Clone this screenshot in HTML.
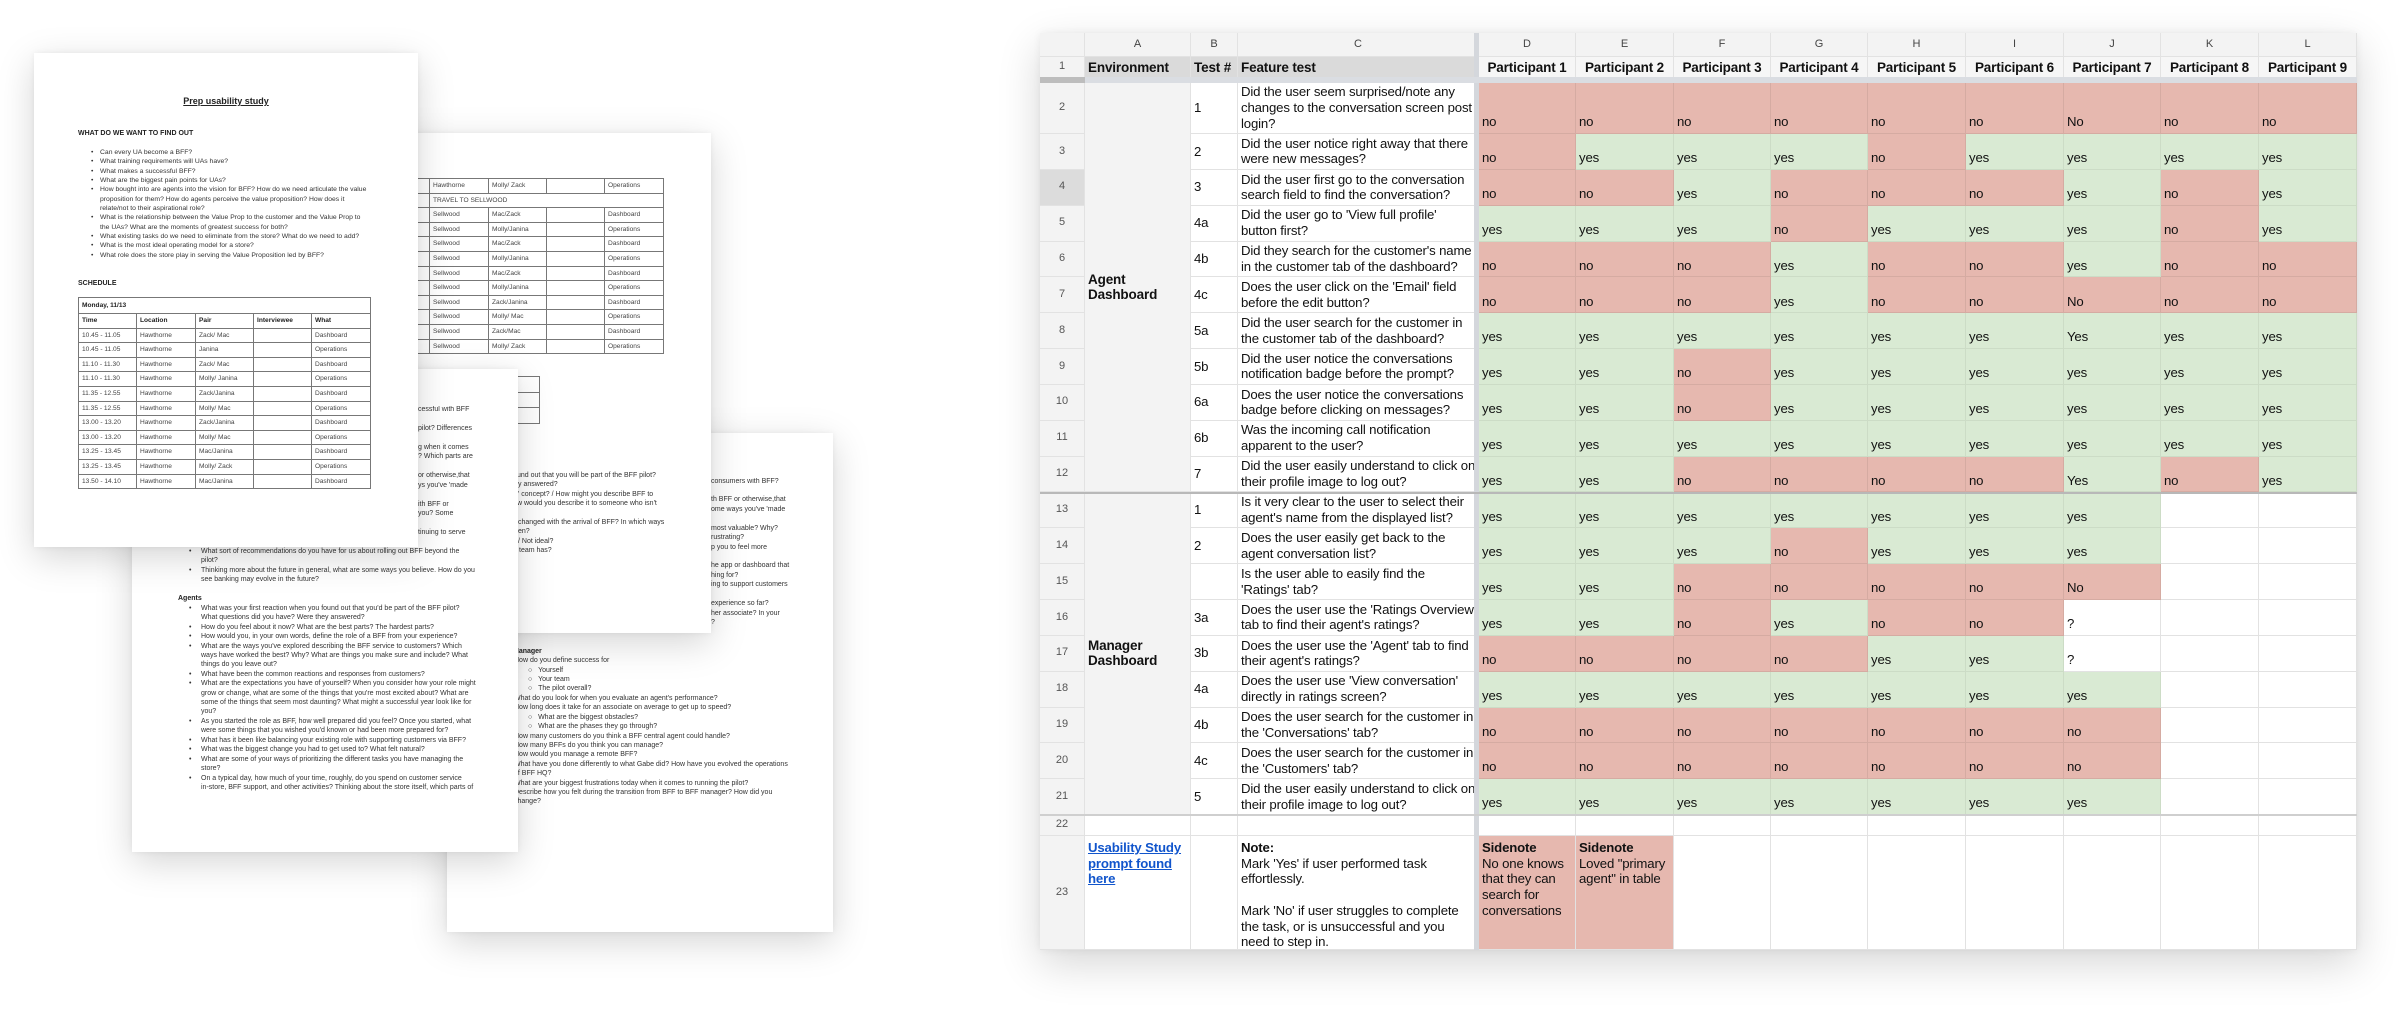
<!DOCTYPE html>
<html><head><meta charset="utf-8">
<style>
*{margin:0;padding:0;box-sizing:border-box}
body{width:2408px;height:1016px;background:#fff;position:relative;overflow:hidden;font-family:"Liberation Sans",Arial,sans-serif}
.pg{position:absolute;background:#fff;box-shadow:0 10px 34px rgba(0,0,0,.17),0 0 6px rgba(0,0,0,.06)}
.pc{position:absolute;inset:0;filter:blur(.35px);color:#333;font-size:7px;line-height:9.4px;white-space:nowrap}
.pc div{position:absolute}
.bt{font-weight:bold;color:#222}
.dt{position:absolute;border-collapse:collapse;table-layout:fixed;font-size:6.6px;color:#444}
.dt td{border:1px solid #777;padding:0 3px;height:14.6px;white-space:nowrap;overflow:hidden}
#sh{position:absolute;left:1040px;top:33px;width:1317px;height:917px;box-shadow:0 14px 40px rgba(0,0,0,.16),0 0 8px rgba(0,0,0,.06);display:grid;
grid-template-columns:45px 106px 47px 241px 97px 98px 97px 97px 98px 98px 97px 98px 98px;
grid-template-rows:24px 26px 51px repeat(19,35.85px) 21px 114px;background:#fff}
#sh i{font-style:normal;border-right:1px solid #e2e2e2;border-bottom:1px solid #e2e2e2;font-size:13.2px;letter-spacing:-0.15px;line-height:15.7px;color:#111;white-space:nowrap;overflow:hidden;padding:0 3px;display:flex;align-items:center}
#sh i.h{background:#f3f3f3;justify-content:center;font-size:11px;color:#444;letter-spacing:0}
#sh i.n{background:#f3f3f3;justify-content:center;font-size:11px;color:#555;letter-spacing:0}
#sh i.p{font-weight:bold;align-items:flex-start;padding-top:3px;font-size:13.5px}
#sh i.p1{background:#dadada}
#sh i.p2{background:#f6f6f6;justify-content:center}
#sh i.r,#sh i.g,#sh i.w{align-items:flex-end;padding-bottom:3px}
#sh i.r{background:#e6b8af;border-color:rgba(0,0,0,.07)}
#sh i.g{background:#d9ead3;border-color:rgba(0,0,0,.06)}
#sh i.m{background:#f3f3f3;font-weight:bold;grid-column:2;font-size:13.5px}
#sh i.tp{align-items:flex-start;padding-top:4px}
a{color:#1155cc;font-weight:bold;text-decoration:underline}
.ov{position:absolute}
</style></head><body>

<!-- Page D (back) -->
<div class="pg" style="left:447px;top:433px;width:386px;height:499px;z-index:1">
<div class="pc">
<div style="left:264px;top:44px">consumers with BFF?</div>
<div style="left:264px;top:62px">th BFF or otherwise,that</div>
<div style="left:264px;top:72px">ome ways you've 'made</div>
<div style="left:264px;top:91px">most valuable? Why?</div>
<div style="left:264px;top:100px">rustrating?</div>
<div style="left:264px;top:110px">p you to  feel more</div>
<div style="left:264px;top:128px">he app or dashboard that</div>
<div style="left:264px;top:138px">hing for?</div>
<div style="left:264px;top:147px">ing to support customers</div>
<div style="left:264px;top:166px">experience so far?</div>
<div style="left:264px;top:176px">her associate? In your</div>
<div style="left:264px;top:185px">?</div>
<div class="bt" style="left:66px;top:214px">Manager</div>
<div style="left:67px;top:223px">How do you define success for</div>
<div style="left:81px;top:233px">○&nbsp;&nbsp;&nbsp;Yourself</div>
<div style="left:81px;top:242px">○&nbsp;&nbsp;&nbsp;Your team</div>
<div style="left:81px;top:251px">○&nbsp;&nbsp;&nbsp;The pilot overall?</div>
<div style="left:67px;top:261px">What do you look for when you evaluate an agent's performance?</div>
<div style="left:67px;top:270px">How long does it take for an associate on average to get up to speed?</div>
<div style="left:81px;top:280px">○&nbsp;&nbsp;&nbsp;What are the biggest obstacles?</div>
<div style="left:81px;top:289px">○&nbsp;&nbsp;&nbsp;What are the phases they go through?</div>
<div style="left:67px;top:299px">How many customers do you think a BFF central  agent could handle?</div>
<div style="left:67px;top:308px">How many BFFs do you think you can manage?</div>
<div style="left:67px;top:317px">How would you manage a remote BFF?</div>
<div style="left:67px;top:327px">What have you done differently to what Gabe did? How have you evolved the operations</div>
<div style="left:67px;top:336px">of BFF HQ?</div>
<div style="left:67px;top:346px">What are your biggest frustrations today when it comes to running the pilot?</div>
<div style="left:67px;top:355px">Describe how you felt during the transition from BFF to BFF manager? How did you</div>
<div style="left:67px;top:364px">change?</div>
</div></div>

<!-- Page B -->
<div class="pg" style="left:300px;top:133px;width:411px;height:500px;z-index:2">
<div class="pc">
<table class="dt" style="left:70px;top:45px;width:293px">
<colgroup><col style="width:59px"><col style="width:59px"><col style="width:58px"><col style="width:58px"><col style="width:59px"></colgroup>
<tr><td></td><td>Hawthorne</td><td>Molly/ Zack</td><td></td><td>Operations</td></tr>
<tr><td></td><td colspan="4">TRAVEL TO SELLWOOD</td></tr>
<tr><td></td><td>Sellwood</td><td>Mac/Zack</td><td></td><td>Dashboard</td></tr>
<tr><td></td><td>Sellwood</td><td>Molly/Janina</td><td></td><td>Operations</td></tr>
<tr><td></td><td>Sellwood</td><td>Mac/Zack</td><td></td><td>Dashboard</td></tr>
<tr><td></td><td>Sellwood</td><td>Molly/Janina</td><td></td><td>Operations</td></tr>
<tr><td></td><td>Sellwood</td><td>Mac/Zack</td><td></td><td>Dashboard</td></tr>
<tr><td></td><td>Sellwood</td><td>Molly/Janina</td><td></td><td>Operations</td></tr>
<tr><td></td><td>Sellwood</td><td>Zack/Janina</td><td></td><td>Dashboard</td></tr>
<tr><td></td><td>Sellwood</td><td>Molly/ Mac</td><td></td><td>Operations</td></tr>
<tr><td></td><td>Sellwood</td><td>Zack/Mac</td><td></td><td>Dashboard</td></tr>
<tr><td></td><td>Sellwood</td><td>Molly/ Zack</td><td></td><td>Operations</td></tr>
</table>
<table class="dt" style="left:170px;top:243px;width:70px">
<tr><td style="height:15.7px"></td></tr><tr><td style="height:15.7px"></td></tr><tr><td style="height:15.7px"></td></tr>
</table>
<div style="left:217px;top:338px">und out that you will be part of the BFF pilot?</div>
<div style="left:218px;top:347px">y answered?</div>
<div style="left:218px;top:357px">' concept? / How might you describe BFF to</div>
<div style="left:217px;top:366px">w would you describe it to someone who isn't</div>
<div style="left:218px;top:385px">changed with the arrival of BFF? In which ways</div>
<div style="left:218px;top:394px">en?</div>
<div style="left:218px;top:404px">/ Not ideal?</div>
<div style="left:219px;top:413px">team has?</div>
</div></div>

<!-- Page C -->
<div class="pg" style="left:132px;top:369px;width:386px;height:483px;z-index:3">
<div class="pc">
<div style="left:286px;top:36px">cessful with BFF</div>
<div style="left:286px;top:55px">pilot? Differences</div>
<div style="left:286px;top:74px">g when it comes</div>
<div style="left:286px;top:83px">? Which parts are</div>
<div style="left:286px;top:102px">or otherwise,that</div>
<div style="left:286px;top:112px">ys you've 'made</div>
<div style="left:286px;top:131px">ith BFF or</div>
<div style="left:286px;top:140px">you? Some</div>
<div style="left:286px;top:159px">tinuing to serve</div>
<div style="left:57px;top:178px">•</div><div style="left:69px;top:178px">What sort of recommendations do you have for us about rolling out BFF beyond the</div>
<div style="left:69px;top:187px">pilot?</div>
<div style="left:57px;top:197px">•</div><div style="left:69px;top:197px">Thinking more about the future in general, what are some ways you believe. How do you</div>
<div style="left:69px;top:206px">see banking may evolve in the future?</div>
<div class="bt" style="left:46px;top:225px">Agents</div>
<div style="left:57px;top:235px">•</div><div style="left:69px;top:235px">What was your first reaction when you found out that you'd be part of the BFF pilot?</div>
<div style="left:69px;top:244px">What questions did you have? Were they answered?</div>
<div style="left:57px;top:254px">•</div><div style="left:69px;top:254px">How do you feel about it now? What are the best parts? The hardest parts?</div>
<div style="left:57px;top:263px">•</div><div style="left:69px;top:263px">How would you, in your own words, define the role of a BFF from your experience?</div>
<div style="left:57px;top:273px">•</div><div style="left:69px;top:273px">What are the ways you've explored describing the BFF service to customers? Which</div>
<div style="left:69px;top:282px">ways have worked the best? Why? What are things you make sure and include? What</div>
<div style="left:69px;top:291px">things do you leave out?</div>
<div style="left:57px;top:301px">•</div><div style="left:69px;top:301px">What have been the common reactions and responses from customers?</div>
<div style="left:57px;top:310px">•</div><div style="left:69px;top:310px">What are the expectations you have of yourself? When you consider how your role might</div>
<div style="left:69px;top:320px">grow or change, what are some of the things that you're most excited about? What are</div>
<div style="left:69px;top:329px">some of the things that seem most daunting? What might a successful year look like for</div>
<div style="left:69px;top:338px">you?</div>
<div style="left:57px;top:348px">•</div><div style="left:69px;top:348px">As you started the role as BFF, how well prepared did you feel?  Once you started, what</div>
<div style="left:69px;top:357px">were some things that you wished you'd known or had been more prepared for?</div>
<div style="left:57px;top:367px">•</div><div style="left:69px;top:367px">What has it been like balancing your existing role with supporting customers via BFF?</div>
<div style="left:57px;top:376px">•</div><div style="left:69px;top:376px">What was the biggest change you had to get used to? What felt natural?</div>
<div style="left:57px;top:386px">•</div><div style="left:69px;top:386px">What are some of your ways of prioritizing the different tasks you have managing the</div>
<div style="left:69px;top:395px">store?</div>
<div style="left:57px;top:405px">•</div><div style="left:69px;top:405px">On a typical day, how much of your time, roughly, do you spend on customer service</div>
<div style="left:69px;top:414px">in-store, BFF support, and other activities? Thinking about the store itself, which parts of</div>
</div></div>

<!-- Page A (front) -->
<div class="pg" style="left:34px;top:53px;width:384px;height:494px;z-index:4">
<div class="pc" style="font-size:6.8px">
<div class="bt" style="left:0;width:384px;text-align:center;top:44px;font-size:9px;text-decoration:underline">Prep usability study</div>
<div class="bt" style="left:44px;top:76px;font-size:7px">WHAT DO WE WANT TO FIND OUT</div>
<div style="left:57px;top:95px;line-height:9.35px">•<br>•<br>•<br>•<br>•<br><br><br>•<br><br>•<br>•<br>•</div>
<div style="left:66px;top:95px;line-height:9.35px">Can every UA become a BFF?<br>What training requirements will UAs have?<br>What makes a successful BFF?<br>What are the biggest pain points for UAs?<br>How bought into are agents into the vision for BFF? How do we need articulate the value<br>proposition for them? How do agents perceive the value proposition? How does it<br>relate/not to their aspirational role?<br>What is the relationship between the Value Prop to the customer and the Value Prop to<br>the UAs? What are the moments of greatest success for both?<br>What existing tasks do we need to eliminate from the store? What do we need to add?<br>What is the most ideal operating model for a store?<br>What role does the store play in serving the Value Proposition led by BFF?</div>
<div class="bt" style="left:44px;top:226px;font-size:7px">SCHEDULE</div>
<table class="dt" style="left:44px;top:244px;width:292px">
<colgroup><col style="width:58px"><col style="width:59px"><col style="width:58px"><col style="width:58px"><col style="width:59px"></colgroup>
<tr><td colspan="5" class="bt" style="height:16px">Monday, 11/13</td></tr>
<tr class="bt"><td>Time</td><td>Location</td><td>Pair</td><td>Interviewee</td><td>What</td></tr>
<tr><td>10.45 - 11.05</td><td>Hawthorne</td><td>Zack/ Mac</td><td></td><td>Dashboard</td></tr>
<tr><td>10.45 - 11.05</td><td>Hawthorne</td><td>Janina</td><td></td><td>Operations</td></tr>
<tr><td>11.10 - 11.30</td><td>Hawthorne</td><td>Zack/ Mac</td><td></td><td>Dashboard</td></tr>
<tr><td>11.10 - 11.30</td><td>Hawthorne</td><td>Molly/ Janina</td><td></td><td>Operations</td></tr>
<tr><td>11.35 - 12.55</td><td>Hawthorne</td><td>Zack/Janina</td><td></td><td>Dashboard</td></tr>
<tr><td>11.35 - 12.55</td><td>Hawthorne</td><td>Molly/ Mac</td><td></td><td>Operations</td></tr>
<tr><td>13.00 - 13.20</td><td>Hawthorne</td><td>Zack/Janina</td><td></td><td>Dashboard</td></tr>
<tr><td>13.00 - 13.20</td><td>Hawthorne</td><td>Molly/ Mac</td><td></td><td>Operations</td></tr>
<tr><td>13.25 - 13.45</td><td>Hawthorne</td><td>Mac/Janina</td><td></td><td>Dashboard</td></tr>
<tr><td>13.25 - 13.45</td><td>Hawthorne</td><td>Molly/ Zack</td><td></td><td>Operations</td></tr>
<tr><td>13.50 - 14.10</td><td>Hawthorne</td><td>Mac/Janina</td><td></td><td>Dashboard</td></tr>
</table>
</div></div>

<!-- Spreadsheet -->
<div id="sh">
<i class="m" style="grid-row:3/14">Agent<br>Dashboard</i>
<i class="m" style="grid-row:14/23">Manager<br>Dashboard</i>

<i class="h"></i><i class="h">A</i><i class="h">B</i><i class="h">C</i><i class="h">D</i><i class="h">E</i><i class="h">F</i><i class="h">G</i><i class="h">H</i><i class="h">I</i><i class="h">J</i><i class="h">K</i><i class="h">L</i>

<i class="n" style="padding-bottom:6px">1</i><i class="p p1">Environment</i><i class="p p1">Test #</i><i class="p p1">Feature test</i><i class="p p2">Participant 1</i><i class="p p2">Participant 2</i><i class="p p2">Participant 3</i><i class="p p2">Participant 4</i><i class="p p2">Participant 5</i><i class="p p2">Participant 6</i><i class="p p2">Participant 7</i><i class="p p2">Participant 8</i><i class="p p2">Participant 9</i>

<i class="n">2</i><i>1</i><i>Did the user seem surprised/note any<br>changes to the conversation screen post<br>login?</i><i class="r">no</i><i class="r">no</i><i class="r">no</i><i class="r">no</i><i class="r">no</i><i class="r">no</i><i class="r">No</i><i class="r">no</i><i class="r">no</i>

<i class="n">3</i><i>2</i><i>Did the user notice right away that there<br>were new messages?</i><i class="r">no</i><i class="g">yes</i><i class="g">yes</i><i class="g">yes</i><i class="r">no</i><i class="g">yes</i><i class="g">yes</i><i class="g">yes</i><i class="g">yes</i>

<i class="n" style="background:#dcdcdc">4</i><i>3</i><i>Did the user first go to the conversation<br>search field to find the conversation?</i><i class="r">no</i><i class="r">no</i><i class="g">yes</i><i class="r">no</i><i class="r">no</i><i class="r">no</i><i class="g">yes</i><i class="r">no</i><i class="g">yes</i>

<i class="n">5</i><i>4a</i><i>Did the user go to 'View full profile'<br>button first?</i><i class="g">yes</i><i class="g">yes</i><i class="g">yes</i><i class="r">no</i><i class="g">yes</i><i class="g">yes</i><i class="g">yes</i><i class="r">no</i><i class="g">yes</i>

<i class="n">6</i><i>4b</i><i>Did they search for the customer's name<br>in the customer tab of the dashboard?</i><i class="r">no</i><i class="r">no</i><i class="r">no</i><i class="g">yes</i><i class="r">no</i><i class="r">no</i><i class="g">yes</i><i class="r">no</i><i class="r">no</i>

<i class="n">7</i><i>4c</i><i>Does the user click on the 'Email' field<br>before the edit button?</i><i class="r">no</i><i class="r">no</i><i class="r">no</i><i class="g">yes</i><i class="r">no</i><i class="r">no</i><i class="r">No</i><i class="r">no</i><i class="r">no</i>

<i class="n">8</i><i>5a</i><i>Did the user search for the customer in<br>the customer tab of the dashboard?</i><i class="g">yes</i><i class="g">yes</i><i class="g">yes</i><i class="g">yes</i><i class="g">yes</i><i class="g">yes</i><i class="g">Yes</i><i class="g">yes</i><i class="g">yes</i>

<i class="n">9</i><i>5b</i><i>Did the user notice the conversations<br>notification badge before the prompt?</i><i class="g">yes</i><i class="g">yes</i><i class="r">no</i><i class="g">yes</i><i class="g">yes</i><i class="g">yes</i><i class="g">yes</i><i class="g">yes</i><i class="g">yes</i>

<i class="n">10</i><i>6a</i><i>Does the user notice the conversations<br>badge before clicking on messages?</i><i class="g">yes</i><i class="g">yes</i><i class="r">no</i><i class="g">yes</i><i class="g">yes</i><i class="g">yes</i><i class="g">yes</i><i class="g">yes</i><i class="g">yes</i>

<i class="n">11</i><i>6b</i><i>Was the incoming call notification<br>apparent to the user?</i><i class="g">yes</i><i class="g">yes</i><i class="g">yes</i><i class="g">yes</i><i class="g">yes</i><i class="g">yes</i><i class="g">yes</i><i class="g">yes</i><i class="g">yes</i>

<i class="n">12</i><i>7</i><i>Did the user easily understand to click on<br>their profile image to log out?</i><i class="g">yes</i><i class="g">yes</i><i class="r">no</i><i class="r">no</i><i class="r">no</i><i class="r">no</i><i class="g">Yes</i><i class="r">no</i><i class="g">yes</i>

<i class="n">13</i><i>1</i><i>Is it very clear to the user to select their<br>agent's name from the displayed list?</i><i class="g">yes</i><i class="g">yes</i><i class="g">yes</i><i class="g">yes</i><i class="g">yes</i><i class="g">yes</i><i class="g">yes</i><i></i><i></i>

<i class="n">14</i><i>2</i><i>Does the user easily get back to the<br>agent conversation list?</i><i class="g">yes</i><i class="g">yes</i><i class="g">yes</i><i class="r">no</i><i class="g">yes</i><i class="g">yes</i><i class="g">yes</i><i></i><i></i>

<i class="n">15</i><i></i><i>Is the user able to easily find the<br>'Ratings' tab?</i><i class="g">yes</i><i class="g">yes</i><i class="r">no</i><i class="r">no</i><i class="r">no</i><i class="r">no</i><i class="r">No</i><i></i><i></i>

<i class="n">16</i><i>3a</i><i>Does the user use the 'Ratings Overview'<br>tab to find their agent's ratings?</i><i class="g">yes</i><i class="g">yes</i><i class="r">no</i><i class="g">yes</i><i class="r">no</i><i class="r">no</i><i class="w">?</i><i></i><i></i>

<i class="n">17</i><i>3b</i><i>Does the user use the 'Agent' tab to find<br>their agent's ratings?</i><i class="r">no</i><i class="r">no</i><i class="r">no</i><i class="r">no</i><i class="g">yes</i><i class="g">yes</i><i class="w">?</i><i></i><i></i>

<i class="n">18</i><i>4a</i><i>Does the user use 'View conversation'<br>directly in ratings screen?</i><i class="g">yes</i><i class="g">yes</i><i class="g">yes</i><i class="g">yes</i><i class="g">yes</i><i class="g">yes</i><i class="g">yes</i><i></i><i></i>

<i class="n">19</i><i>4b</i><i>Does the user search for the customer in<br>the 'Conversations' tab?</i><i class="r">no</i><i class="r">no</i><i class="r">no</i><i class="r">no</i><i class="r">no</i><i class="r">no</i><i class="r">no</i><i></i><i></i>

<i class="n">20</i><i>4c</i><i>Does the user search for the customer in<br>the 'Customers' tab?</i><i class="r">no</i><i class="r">no</i><i class="r">no</i><i class="r">no</i><i class="r">no</i><i class="r">no</i><i class="r">no</i><i></i><i></i>

<i class="n">21</i><i>5</i><i>Did the user easily understand to click on<br>their profile image to log out?</i><i class="g">yes</i><i class="g">yes</i><i class="g">yes</i><i class="g">yes</i><i class="g">yes</i><i class="g">yes</i><i class="g">yes</i><i></i><i></i>

<i class="n">22</i><i></i><i></i><i></i><i></i><i></i><i></i><i></i><i></i><i></i><i></i><i></i><i></i>

<i class="n">23</i><i class="tp"><a>Usability Study<br>prompt found<br>here</a></i><i></i><i class="tp"><span><b>Note:</b><br>Mark 'Yes' if user performed task<br>effortlessly.<br><br>Mark 'No' if user struggles to complete<br>the task, or is unsuccessful and you<br>need to step in.</span></i><i class="tp" style="background:#e6b8af"><span><b>Sidenote</b><br>No one knows<br>that they can<br>search for<br>conversations</span></i><i class="tp" style="background:#e6b8af"><span><b>Sidenote</b><br>Loved "primary<br>agent" in table</span></i><i></i><i></i><i></i><i></i><i></i><i></i><i></i>
</div>

<!-- overlays -->
<div class="ov" style="left:1474px;top:33px;width:5px;height:917px;background:#d4d7dc"></div>
<div class="ov" style="left:1040px;top:77px;width:1317px;height:6px;background:#dadde2"></div>
<div class="ov" style="left:1040px;top:77px;width:45px;height:6px;background:#bdbdbd"></div>
<div class="ov" style="left:1040px;top:492px;width:1317px;height:2px;background:#b8b8b8"></div>
<div class="ov" style="left:1040px;top:814px;width:1317px;height:2px;background:#cfcfcf"></div>
</body></html>
